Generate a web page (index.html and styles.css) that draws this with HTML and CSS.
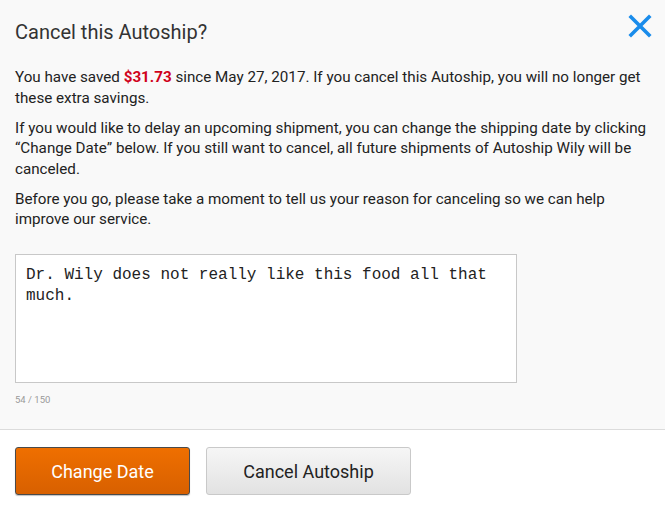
FILE: index.html
```html
<!DOCTYPE html>
<html>
<head>
<meta charset="utf-8">
<link rel="stylesheet" href="styles.css">
</head>
<body>
<div class="modal">
  <div class="content">
    <div class="header">
      <h1 class="title">Cancel this Autoship?</h1>
      <button class="close" aria-label="Close">
        <svg width="24" height="24" viewBox="0 0 24 24"><path d="M3 3 L21 21 M21 3 L3 21" stroke="#1a8ceb" stroke-width="3.6" stroke-linecap="square" fill="none"/></svg>
      </button>
    </div>
    <p class="para">You have saved <strong class="price">$31.73</strong> since May 27, 2017. If you cancel this Autoship, you will no longer get these extra savings.</p>
    <p class="para">If you would like to delay an upcoming shipment, you can change the shipping date by clicking “Change Date” below. If you still want to cancel, all future shipments of Autoship Wily will be canceled.</p>
    <p class="para">Before you go, please take a moment to tell us your reason for canceling so we can help improve our service.</p>
    <div class="reason">Dr. Wily does not really like this food all that much.</div>
    <div class="counter">54 / 150</div>
  </div>
  <div class="footer">
    <button class="btn btn-primary">Change Date</button>
    <button class="btn btn-secondary">Cancel Autoship</button>
  </div>
</div>
</body>
</html>
```
FILE: styles.css
```css
html, body {
  margin: 0;
  padding: 0;
  background: #ffffff;
  font-family: Roboto, "Liberation Sans", sans-serif;
  color: #222;
}
.modal {
  width: 665px;
  height: 508px;
  display: flex;
  flex-direction: column;
}
.content {
  background: #f9f9f9;
  padding: 0 15px 0 15px;
  border-bottom: 1px solid #dcdcdc;
  height: 430px;
  box-sizing: border-box;
}
.header {
  display: flex;
  justify-content: space-between;
  align-items: flex-start;
  height: 67px;
}
.title {
  margin: 20px 0 0 0;
  font-size: 20px;
  font-weight: 400;
  color: #333;
  line-height: 24px;
}
.close {
  background: none;
  border: 0;
  padding: 0;
  margin: 14px -2px 0 0;
  width: 24px;
  height: 24px;
  cursor: pointer;
}
.close svg { display: block; }
.para {
  margin: 0 0 9.5px 0;
  font-size: 15.2px;
  line-height: 20.5px;
  color: #222;
}
.price {
  color: #d0021b;
  font-weight: 700;
}
.reason {
  margin-top: 24px;
  width: 502px;
  height: 129px;
  box-sizing: border-box;
  background: #fff;
  border: 1px solid #c8c8c8;
  padding: 10px 10px;
  font-family: "Liberation Mono", "Courier New", monospace;
  font-size: 16px;
  line-height: 21px;
  color: #222;
}
.counter {
  margin-top: 11px;
  font-size: 9.5px;
  color: #999;
}
.footer {
  display: flex;
  gap: 16px;
  padding: 17px 15px 0 15px;
  background: #fff;
}
.btn {
  height: 48px;
  border-radius: 3px;
  font-family: Roboto, "Liberation Sans", sans-serif;
  font-size: 18px;
  padding: 0;
  cursor: pointer;
}
.btn-primary {
  width: 175px;
  color: #fff;
  background: linear-gradient(#ef6f00, #d86000);
  border: 1px solid #4a4a4a;
  box-shadow: 0 1px 1px rgba(0,0,0,0.25);
}
.btn-secondary {
  width: 205px;
  color: #222;
  background: linear-gradient(#f6f6f6, #e2e2e2);
  border: 1px solid #c9c9c9;
}
```
